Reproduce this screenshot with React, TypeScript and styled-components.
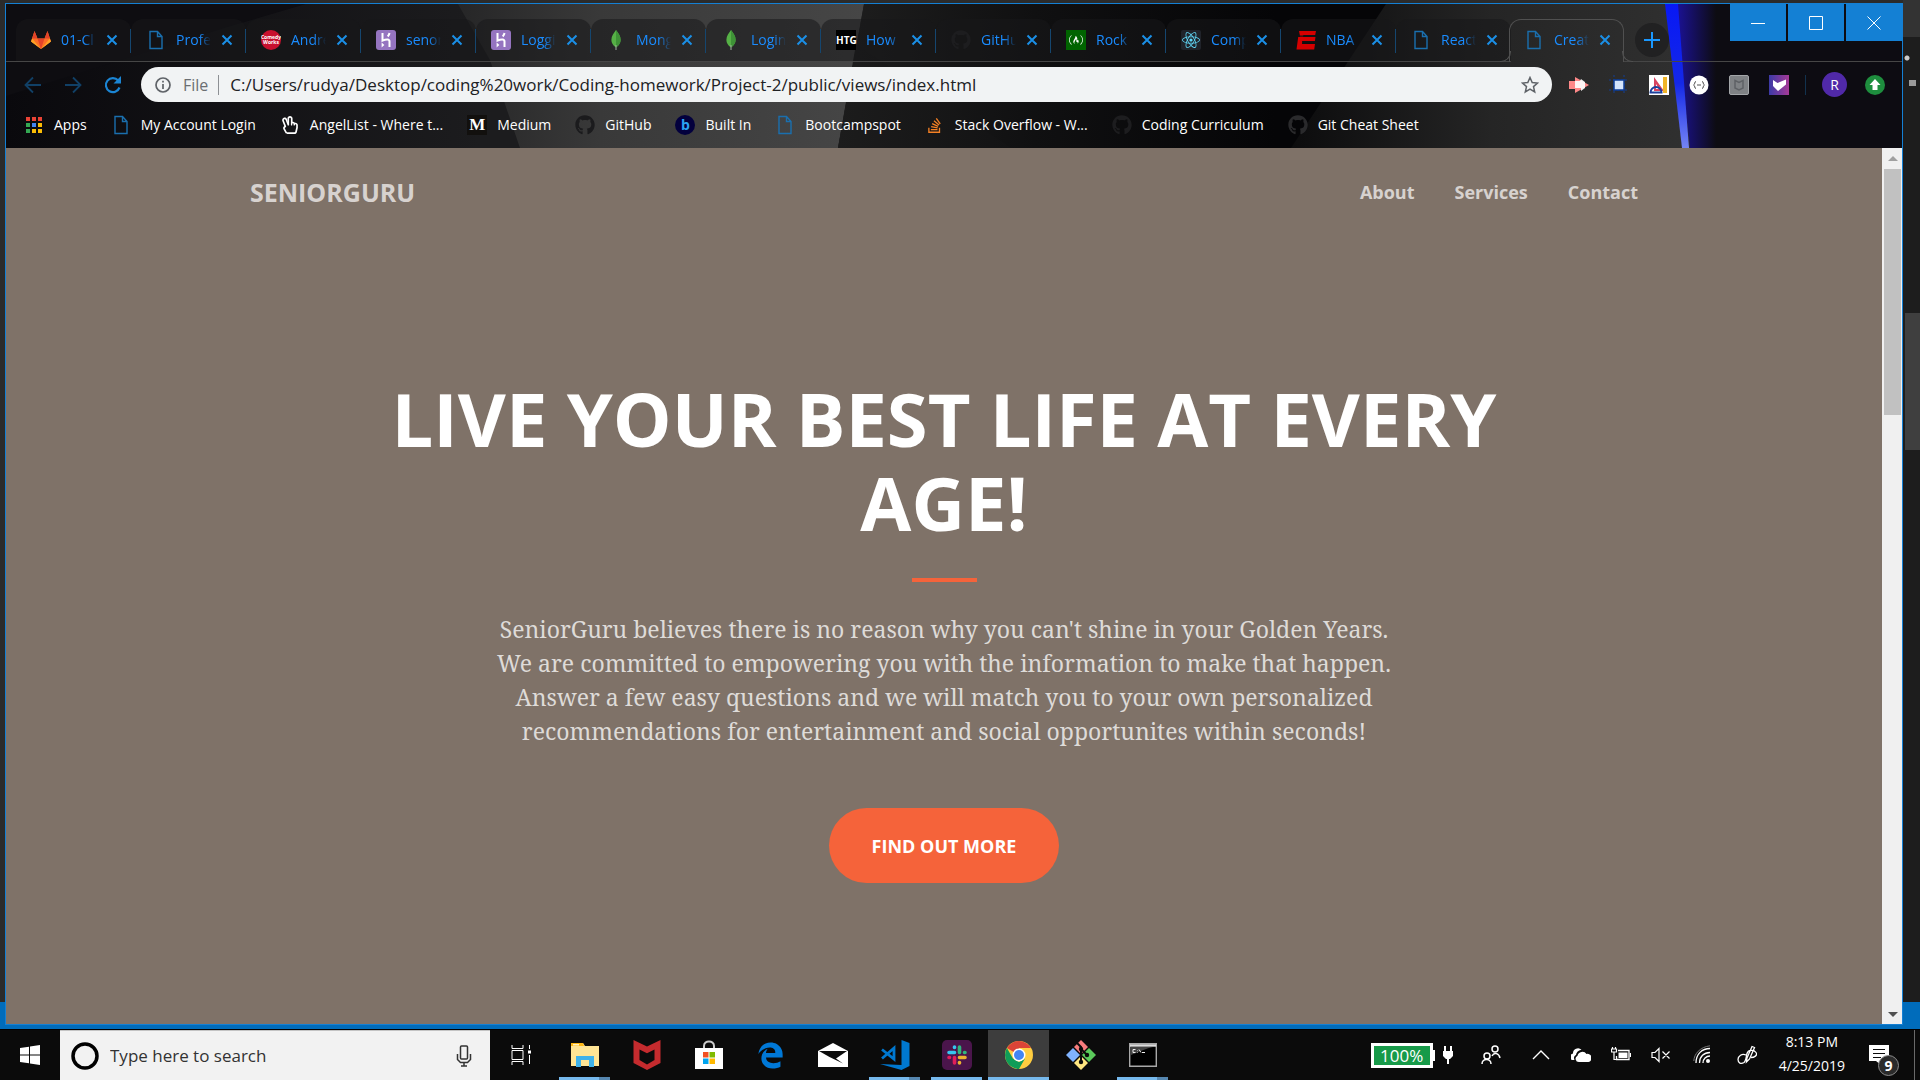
import React from "react";
import styled, { createGlobalStyle, css } from "styled-components";
import {
  FaGithub,
  FaReact,
  FaStackOverflow,
  FaRegHandPeace,
  FaFreeCodeCamp,
  FaEdgeLegacy,
} from "react-icons/fa";

const ui = `"Open Sans", "Noto Sans", sans-serif`;
const accent = "#1a8cff";
const blue = "#1480d4";
const orange = "#f5633a";

const GlobalStyle = createGlobalStyle`
  * { box-sizing: border-box; }
  body { margin: 0; background: #0b0b0b; font-family: ${ui}; }
  button, input { font-family: inherit; border: 0; padding: 0; background: none; color: inherit; }
  a { color: inherit; text-decoration: none; }
  svg { display: block; flex: none; }
`;

/* ---------- desktop and window ---------- */

const Screen = styled.div`
  min-height: 100vh;
  display: flex;
  flex-direction: column;
`;

const Desktop = styled.div`
  flex: 1;
  display: flex;
  padding: 3px 17px 4px 5px;
  background:
    radial-gradient(circle at 4px 4px, #ccc 2px, transparent 3px) right 9px top 54px / 8px 8px no-repeat,
    linear-gradient(#9a9a9a, #9a9a9a) right 4px top 80px / 7px 6px no-repeat,
    linear-gradient(#3f3f3f, #3f3f3f) right 313px / 15px 137px no-repeat,
    linear-gradient(#006cbb, #006cbb) left bottom / 100% 27px no-repeat,
    linear-gradient(#333 0 37px, #1d1d1d 37px) right top / 17px 100% no-repeat,
    #2b2b2b;
`;

const BrowserWindow = styled.div`
  flex: 1;
  min-width: 0;
  display: flex;
  flex-direction: column;
  border: 1px solid ${blue};
`;

const Frame = styled.header`
  position: relative;
  background: #0d0c10;
  color: #fff;
`;

const FrameArt = styled.svg`
  position: absolute;
  inset: 0;
  width: 100%;
  height: 100%;
`;

/* ---------- tabs ---------- */

const TabStrip = styled.div`
  position: relative;
  display: flex;
  height: 58px;
`;

const StripLead = styled.div`
  width: 10px;
  border-bottom: 1px solid #464646;
`;

const Tab = styled.div<{ $active?: boolean }>`
  position: relative;
  flex: 0 1 115px;
  min-width: 0;
  margin-top: 15px;
  padding: 0 13px 0 15px;
  display: flex;
  align-items: center;
  gap: 10px;
  border-radius: 12px 12px 0 0;
  ${(p) =>
    p.$active
      ? css`
          margin-left: -2px;
          border: 1px solid #505050;
          border-bottom: 0;
          padding: 0 12px 2px 14px;
          &::before,
          &::after {
            content: "";
            position: absolute;
            bottom: 0;
            width: 10px;
            height: 10px;
            border-bottom: 1px solid #505050;
          }
          &::before {
            left: -10px;
            border-right: 1px solid #505050;
            border-bottom-right-radius: 10px;
          }
          &::after {
            right: -10px;
            border-left: 1px solid #505050;
            border-bottom-left-radius: 10px;
          }
        `
      : css`
          background: rgba(24, 24, 25, 0.55);
          border-bottom: 1px solid #464646;
          &:not(:nth-last-child(3))::after {
            content: "";
            position: absolute;
            right: 0;
            top: 10px;
            height: 24px;
            width: 1px;
            background: #15466f;
          }
        `}
`;

const TabTitle = styled.span`
  flex: 1;
  min-width: 0;
  overflow: hidden;
  white-space: nowrap;
  font-size: 14px;
  line-height: 20px;
  color: ${accent};
  mask-image: linear-gradient(90deg, #000 65%, transparent);
`;

const TabClose = styled.button`
  width: 12px;
  height: 12px;
  color: #1b8fe6;
`;

const StripRest = styled.div`
  flex: 1;
  display: flex;
  justify-content: space-between;
  border-bottom: 1px solid #464646;
`;

const NewTab = styled.button`
  margin: 19px 0 0 11px;
  width: 34px;
  height: 34px;
  border-radius: 50%;
  background: #212122;
  color: #1a98ff;
  display: grid;
  place-items: center;
`;

const WindowControls = styled.div`
  display: flex;
  gap: 2px;
  height: 37px;
`;

const WindowButton = styled.button`
  width: 56px;
  background: ${blue};
  color: #fff;
  display: grid;
  place-items: center;
`;

/* ---------- toolbar ---------- */

const Toolbar = styled.div`
  position: relative;
  display: flex;
  align-items: center;
  height: 45px;
  padding: 0 17px;
`;

const NavButton = styled.button<{ $dim?: boolean }>`
  width: 20px;
  height: 20px;
  margin-right: 20px;
  color: ${(p) => (p.$dim ? "#114066" : "#1b85d4")};
`;

const AddressBar = styled.div`
  flex: 1;
  display: flex;
  align-items: center;
  height: 35px;
  margin: 0 17px 0 -2px;
  padding: 0 13px 0 14px;
  border-radius: 18px;
  background: #f1f3f4;
  color: #202124;
  font-size: 16px;
`;

const Scheme = styled.label`
  display: flex;
  align-items: center;
  gap: 10px;
  margin-left: 12px;
  color: #6b6e72;
  &::after {
    content: "";
    width: 1px;
    height: 20px;
    margin-right: 11px;
    background: #8d9094;
  }
`;

const UrlInput = styled.input`
  flex: 1;
  min-width: 0;
  font-size: 17px;
  outline: 0;
`;

const Extensions = styled.div`
  display: flex;
  align-items: center;
  gap: 20px;
`;

const Ext = styled.button`
  width: 20px;
  height: 20px;
  display: grid;
  place-items: center;
`;

const ExtDivider = styled.span`
  width: 1px;
  height: 20px;
  margin: 0 -4px;
  background: #12324e;
`;

const Avatar = styled.button`
  width: 25px;
  height: 25px;
  margin-right: -2px;
  border-radius: 50%;
  background: #5029a8;
  color: #fff;
  font-size: 14px;
  line-height: 25px;
`;

const Bookmarks = styled.nav`
  position: relative;
  display: flex;
  align-items: center;
  gap: 24px;
  height: 41px;
  padding: 0 18px 5px;
  font-size: 14px;
  line-height: 20px;
  white-space: nowrap;
`;

const Bookmark = styled.a`
  display: flex;
  align-items: center;
  gap: 10px;
`;

const Glyph = styled.span<{
  $bg?: string;
  $color?: string;
  $round?: number;
  $size?: number;
  $face?: string;
}>`
  flex: none;
  width: 20px;
  height: 20px;
  display: grid;
  place-items: center;
  border-radius: ${(p) => p.$round ?? 0}px;
  background: ${(p) => p.$bg ?? "none"};
  color: ${(p) => p.$color ?? "#fff"};
  font-family: ${(p) => p.$face ?? "inherit"};
  font-size: ${(p) => p.$size ?? 20}px;
  line-height: 20px;
  font-weight: 700;
`;

/* ---------- page ---------- */

const Viewport = styled.div`
  flex: 1;
  display: flex;
`;

const Page = styled.main`
  flex: 1;
  min-width: 0;
  background: #7f7268;
  color: #fff;
`;

const SiteNav = styled.nav`
  display: flex;
  align-items: center;
  justify-content: space-between;
  max-width: 1388px;
  height: 88px;
  margin: 0 auto;
  font-weight: 700;
  color: rgba(255, 255, 255, 0.7);
`;

const Brand = styled.a`
  font-size: 25px;
`;

const SiteLinks = styled.div`
  display: flex;
  gap: 40px;
  font-size: 18px;
`;

const Hero = styled.section`
  display: flex;
  flex-direction: column;
  align-items: center;
  padding: 141px 20px 60px;
  text-align: center;
`;

const Headline = styled.h1`
  max-width: 1160px;
  margin: 0;
  font-size: 74px;
  line-height: 84px;
  font-weight: 700;
`;

const Rule = styled.hr`
  width: 65px;
  height: 4px;
  margin: 33px 0 30px;
  border: 0;
  background: ${orange};
`;

const Lead = styled.p`
  margin: 0 0 60px;
  font-family: "Noto Serif", "DejaVu Serif Condensed", "Liberation Serif", serif;
  font-size: 23px;
  line-height: 34px;
  color: #dedbd8;
`;

const LeadLine = styled.span`
  display: block;
`;

const CallToAction = styled.button`
  height: 75px;
  padding: 0 43px;
  border-radius: 38px;
  background: ${orange};
  color: #fff;
  font-size: 18px;
  font-weight: 700;
`;

const Scrollbar = styled.div`
  width: 20px;
  display: flex;
  flex-direction: column;
  align-items: center;
  padding: 8px 1px 7px 2px;
  background: #f0f0f0;
`;

const ScrollThumb = styled.div`
  width: 100%;
  height: 246px;
  margin: 8px 0 auto;
  background: #c1c1c1;
`;

/* ---------- taskbar ---------- */

const Taskbar = styled.footer`
  display: flex;
  align-items: stretch;
  height: 51px;
  border-top: 1px solid #000;
  background: #0b0b0b;
  color: #fff;
`;

const Start = styled.button`
  width: 60px;
  display: grid;
  place-items: center;
`;

const SearchBox = styled.label`
  width: 430px;
  display: flex;
  align-items: center;
  padding: 0 18px 0 11px;
  gap: 11px;
  background: #f2f2f2;
  border-top: 1px solid #c4c4c4;
  color: #2b2b2b;
`;

const SearchInput = styled.input`
  flex: 1;
  min-width: 0;
  font-size: 17px;
  outline: 0;
  &::placeholder {
    color: #333;
    opacity: 1;
  }
`;

const Apps = styled.div`
  display: flex;
  gap: 1px;
  margin-right: auto;
`;

const AppButton = styled.button<{ $state?: "open" | "many" | "focus" }>`
  width: 61px;
  display: grid;
  place-items: center;
  background: ${(p) => (p.$state === "focus" ? "#3d3d3d" : "none")};
  position: relative;
  ${(p) =>
    p.$state &&
    css`
      &::after {
        content: "";
        position: absolute;
        bottom: 0;
        left: ${p.$state === "focus" ? 0 : 5}px;
        right: ${p.$state === "focus" ? 0 : 5}px;
        height: 3px;
        background: ${p.$state === "many"
          ? "linear-gradient(90deg, #76b9ed 0 40px, #5687b0 40px)"
          : "#76b9ed"};
      }
    `}
`;

const TaskViewButton = styled(AppButton)`
  margin-right: 2px;
`;

const Battery = styled.div`
  display: flex;
  align-items: center;
  gap: 10px;
  margin-right: 28px;
`;

const Charge = styled.span`
  position: relative;
  width: 62px;
  height: 25px;
  border: 3px solid #fff;
  background: #179a49;
  font-size: 17px;
  line-height: 19px;
  text-align: center;
  &::after {
    content: "";
    position: absolute;
    left: 59px;
    top: 4px;
    width: 2px;
    height: 11px;
    background: #fff;
  }
`;

const Tray = styled.div`
  display: flex;
  align-items: center;
  gap: 20px;
`;

const TrayButton = styled.button<{ $lead?: number }>`
  width: 20px;
  height: 20px;
  margin-left: ${(p) => p.$lead ?? 0}px;
`;

const Clock = styled.time`
  margin: 0 24px 0 22px;
  font-size: 14px;
  line-height: 24px;
  text-align: center;
  white-space: nowrap;
`;

const Notifications = styled.button`
  position: relative;
  width: 30px;
  margin-right: 15px;
  display: flex;
  align-items: center;
`;

const Badge = styled.span`
  position: absolute;
  right: 0;
  top: 25px;
  width: 21px;
  height: 21px;
  border: 1px solid #8c8c8c;
  border-radius: 50%;
  background: #2b2b2b;
  font-size: 14px;
  line-height: 19px;
  font-weight: 700;
  text-align: center;
`;

const ShowDesktop = styled.button`
  width: 6px;
  border-left: 1px solid #6a6a6a;
`;

/* ---------- drawings ---------- */

const Svg = ({ s = 20, h, children }: { s?: number; h?: number; children: React.ReactNode }) => (
  <svg
    width={s}
    height={h ?? s}
    viewBox={`0 0 ${s} ${h ?? s}`}
    fill="none"
    stroke="currentColor"
    aria-hidden="true"
  >
    {children}
  </svg>
);

const FileIcon = () => (
  <Glyph $color="#1a6fae">
    <Svg>
      <path d="M4 1.5h7.5l4.5 5V18.5H4zM11.500 1.500v5H16" strokeWidth="1.4" />
    </Svg>
  </Glyph>
);

const HerokuIcon = () => (
  <Glyph $bg="#9574c0" $round={3}>
    <Svg>
      <path d="M6.500 3v7.600c4-1.800 7-1.600 7 .8V17M13.500 3c-.2 1.500-.8 2.500-1.800 3.500" strokeWidth="2" />
      <path d="M5.600 12.600v4.800l2.800-2.400z" fill="#fff" stroke="none" />
    </Svg>
  </Glyph>
);

const LeafIcon = () => (
  <Glyph>
    <Svg>
      <path d="M10 0c2.500 3.500 4.600 5.800 4.600 9.800S12 16 10 17.500C8 16 5.400 13.800 5.400 9.800S8 3 10 0z" fill="#56b146" stroke="none" />
      <path d="M10 0c2.500 3.500 4.600 5.800 4.600 9.800S12 16 10 17.500z" fill="#3f9337" stroke="none" />
      <path d="M10 15v5" stroke="#9fb0a0" />
    </Svg>
  </Glyph>
);

const ComedyText = styled.text`
  font: 700 5px ${ui};
  fill: #fff;
  stroke: none;
`;

const ComedyIcon = () => (
  <Glyph $bg="#c8102e" $round={10}>
    <Svg>
      <ComedyText x="10" y="9" textAnchor="middle">Comedy</ComedyText>
      <ComedyText x="10" y="14" textAnchor="middle">Works</ComedyText>
    </Svg>
  </Glyph>
);

const GitlabIcon = () => (
  <Glyph>
    <Svg>
      <path d="M10 19 0 11.500 3.500 1l3 7.500h7L16.500 1 20 11.500z" fill="#fc6d26" stroke="none" />
      <path d="M10 19 6.500 8.500h7z" fill="#e24329" stroke="none" />
      <path d="M10 19 0 11.500l1.200-3zM10 19l10-7.500-1.200-3z" fill="#fca326" stroke="none" />
      <path d="M3.500 1 1.200 8.500h5.300zM16.500 1l-3 7.500h5.300z" fill="#e24329" stroke="none" />
    </Svg>
  </Glyph>
);

const EspnIcon = () => (
  <Glyph>
    <Svg>
      <path d="M3 1h17l-.8 4H7.300L7 7h12.500l-.6 4H6.400L6 14h13l-.8 5.500H.5L2.200 7h2z" fill="#d50000" stroke="none" />
      <path d="M2 6.200h17M6 11.800h13" stroke="#151515" strokeWidth="1.200" />
    </Svg>
  </Glyph>
);

const AppsIcon = () => {
  const colors = ["#ea4335", "#ea4335", "#ea4335", "#34a853", "#4285f4", "#fbbc05", "#34a853", "#fbbc05", "#fbbc05"];
  return (
    <Glyph>
      <Svg>
        {colors.map((c, i) => (
          <rect key={i} x={2 + (i % 3) * 6} y={2 + Math.floor(i / 3) * 6} width="4" height="4" fill={c} stroke="none" />
        ))}
      </Svg>
    </Glyph>
  );
};

const CrossIcon = () => (
  <Svg s={12}>
    <path d="m1.500 1.500 9 9m0-9-9 9" strokeWidth="2" />
  </Svg>
);

/* ---------- data ---------- */

const tabs: { title: string; icon: React.ReactNode }[] = [
  { title: "01-Cl", icon: <GitlabIcon /> },
  { title: "Profe", icon: <FileIcon /> },
  { title: "Andre", icon: <ComedyIcon /> },
  { title: "senor", icon: <HerokuIcon /> },
  { title: "Loggi", icon: <HerokuIcon /> },
  { title: "Mong", icon: <LeafIcon /> },
  { title: "Login", icon: <LeafIcon /> },
  { title: "How", icon: <Glyph $bg="#000" $size={10}>HTG</Glyph> },
  { title: "GitHu", icon: <Glyph $color="#1d1d1f"><FaGithub /></Glyph> },
  { title: "Rock", icon: <Glyph $bg="#006400" $size={14}><FaFreeCodeCamp /></Glyph> },
  { title: "Comp", icon: <Glyph $bg="#20232a" $color="#61dafb" $size={18} $round={2}><FaReact /></Glyph> },
  { title: "NBA", icon: <EspnIcon /> },
  { title: "React", icon: <FileIcon /> },
  { title: "Creat", icon: <FileIcon /> },
];

const bookmarks: { title: string; icon: React.ReactNode }[] = [
  { title: "Apps", icon: <AppsIcon /> },
  { title: "My Account Login", icon: <FileIcon /> },
  { title: "AngelList - Where t...", icon: <Glyph $size={18}><FaRegHandPeace /></Glyph> },
  { title: "Medium", icon: <Glyph $bg="#12100e" $size={17} $face={`"Liberation Serif", serif`}>M</Glyph> },
  { title: "GitHub", icon: <Glyph $color="#1b1b1d"><FaGithub /></Glyph> },
  { title: "Built In", icon: <Glyph $bg="#03003d" $color="#2aa4f4" $round={10} $size={14}>b</Glyph> },
  { title: "Bootcampspot", icon: <FileIcon /> },
  { title: "Stack Overflow - W...", icon: <Glyph $color="#f48024" $size={17}><FaStackOverflow /></Glyph> },
  { title: "Coding Curriculum", icon: <Glyph $color="#1d1d1f"><FaGithub /></Glyph> },
  { title: "Git Cheat Sheet", icon: <Glyph $color="#2a2a2c"><FaGithub /></Glyph> },
];

/* ---------- sections ---------- */

const BrowserFrame = () => (
  <Frame>
    <FrameArt viewBox="0 0 1896 144" preserveAspectRatio="none" aria-hidden="true">
      <defs>
        <linearGradient id="left" x1="0" x2="1"><stop offset="0" stopColor="#0a090d" /><stop offset=".55" stopColor="#1c1c1e" /></linearGradient>
        <linearGradient id="mid" x1="0" x2="1"><stop offset="0" stopColor="#262627" /><stop offset=".35" stopColor="#393939" /><stop offset="1" stopColor="#464646" /></linearGradient>
        <linearGradient id="fade" x1="0" x2="1"><stop offset="0" stopColor="#1e1e1e" /><stop offset=".45" stopColor="#101011" /><stop offset="1" stopColor="#050507" /></linearGradient>
        <linearGradient id="facet" x1="0" x2="1"><stop offset="0" stopColor="#1c1c1c" /><stop offset="1" stopColor="#131314" /></linearGradient>
        <linearGradient id="right" x1="0" x2="1"><stop offset="0" stopColor="#0c0c0d" /><stop offset=".5" stopColor="#252525" /><stop offset="1" stopColor="#303030" /></linearGradient>
        <linearGradient id="glow" x1="0" x2="1"><stop offset="0" stopColor="#1c12a0" /><stop offset="1" stopColor="#0d0c12" /></linearGradient>
        <linearGradient id="beam" x1="0" x2="0" y1="0" y2="1"><stop offset="0" stopColor="#0818f5" /><stop offset=".55" stopColor="#1428e8" /><stop offset="1" stopColor="#7484f4" /></linearGradient>
      </defs>
      <rect width="1896" height="144" fill="#0d0c12" />
      <path d="M0 0H300L225 22 0 92z" fill="#0e0d11" />
      <path d="M300 0H860V144H0V92L225 22z" fill="url(#left)" />
      <path d="M452 0H858L832 144H514L484 56z" fill="url(#mid)" />
      <path d="M832 144 858 0h412v144z" fill="url(#fade)" />
      <path d="M850 40 1005 144H832z" fill="url(#facet)" />
      <path d="M1268 0h115l-95 144h-20z" fill="#050507" />
      <path d="M1380 0h290l16 144h-401z" fill="url(#right)" />
      <path d="M1668 0h42v144h-26z" fill="url(#glow)" />
      <path d="M1659 0h13l11 144h-7z" fill="url(#beam)" />
    </FrameArt>

    <TabStrip>
      <StripLead />
      {tabs.map((t, i) => (
        <Tab key={i} $active={i === tabs.length - 1}>
          {t.icon}
          <TabTitle>{t.title}</TabTitle>
          <TabClose aria-label={`Close ${t.title}`}><CrossIcon /></TabClose>
        </Tab>
      ))}
      <StripRest>
        <NewTab aria-label="New tab">
          <Svg s={16}><path d="M8 0v16M0 8h16" strokeWidth="2" /></Svg>
        </NewTab>
        <WindowControls>
          <WindowButton aria-label="Minimize"><Svg s={14}><path d="M0 7.500h14" /></Svg></WindowButton>
          <WindowButton aria-label="Maximize"><Svg s={14}><path d="M.5.5h13v13H.5z" /></Svg></WindowButton>
          <WindowButton aria-label="Close"><Svg s={14}><path d="m.5.5 13 13m0-13-13 13" /></Svg></WindowButton>
        </WindowControls>
      </StripRest>
    </TabStrip>

    <Toolbar>
      <NavButton $dim aria-label="Back"><Svg><path d="M18 10H3m7-7.500L2.500 10l7.500 7.500" strokeWidth="1.800" /></Svg></NavButton>
      <NavButton $dim aria-label="Forward"><Svg><path d="M2 10h15m-7-7.500 7.500 7.500-7.500 7.500" strokeWidth="1.800" /></Svg></NavButton>
      <NavButton aria-label="Reload">
        <Svg><path d="M16.500 12.500A7 7 0 1 1 15.200 5.500" strokeWidth="2.200" /><path d="M18 1v7.500h-7.500z" fill="currentColor" stroke="none" /></Svg>
      </NavButton>
      <AddressBar>
        <Svg s={16}><circle cx="8" cy="8" r="7" strokeWidth="1.700" stroke="#5f6368" /><path d="M8 7v5M8 3.800v1.800" stroke="#5f6368" strokeWidth="1.700" /></Svg>
        <Scheme htmlFor="url">File</Scheme>
        <UrlInput id="url" defaultValue="C:/Users/rudya/Desktop/coding%20work/Coding-homework/Project-2/public/views/index.html" />
        <Svg s={18}><path d="m9 1.500 2.200 5 5.300.5-4 3.600 1.200 5.400L9 13.200 4.300 16l1.200-5.400-4-3.600 5.300-.5z" stroke="#5f6368" strokeWidth="1.500" /></Svg>
      </AddressBar>
      <Extensions>
        <Ext aria-label="Record">
          <Svg><path d="M0 6h6V2l14 8-14 8v-4H0z" fill="#f88" stroke="none" /><path d="M6 6h5l1-2 4 3v6l-4 3v-3H6z" fill="#fff" stroke="none" opacity=".9" /></Svg>
        </Ext>
        <Ext aria-label="Capture">
          <Svg><path d="M5 0v20M15 0v20M0 5h20M0 15h20" stroke="#123f94" strokeDasharray="2 2" /><path d="M5 5h10v10H5z" fill="#d4e4fb" stroke="#0d3c96" strokeWidth="1.500" /></Svg>
        </Ext>
        <Ext aria-label="Design tools">
          <Svg>
            <path d="M0 0h20v20H0z" fill="#fff" stroke="none" />
            <path d="M5 2v14h10zM7 9v5h3z" fill="#d8435f" stroke="none" fillRule="evenodd" />
            <path d="M14 2h4v16h-4z" fill="#f0b429" stroke="none" />
            <path d="M1.500 17.500a5.500 5.500 0 0 1 11 0z" stroke="#1b3f9c" strokeWidth="2" />
          </Svg>
        </Ext>
        <Ext aria-label="JSON viewer">
          <Svg><circle cx="10" cy="10" r="9.500" fill="#fff" stroke="none" /><path d="M7 6.500c-2 0-.5 3-2.500 3.500 2 .5.5 3.500 2.500 3.500M13 6.500c2 0 .5 3 2.500 3.500-2 .5-.5 3.500-2.500 3.500M8 10h4" stroke="#555" /></Svg>
        </Ext>
        <Ext aria-label="WebAdvisor">
          <Svg><rect x=".5" y=".5" width="19" height="19" rx="1.500" fill="#7f8285" stroke="#a3a6a9" /><path d="m6 5.500 4 2 4-2v7.500l-4 2-4-2z" stroke="#5f6266" strokeWidth="1.500" /></Svg>
        </Ext>
        <Ext aria-label="Shopping">
          <Svg>
            <defs><linearGradient id="shop" x1="0" x2="1"><stop offset="0" stopColor="#3c3aa6" /><stop offset="1" stopColor="#a53a96" /></linearGradient></defs>
            <path d="M0 0h20v20H0z" fill="url(#shop)" stroke="none" /><path d="m4 5 4.500 3L17 4.500v5L9 16l-5-5z" fill="#fff" stroke="none" />
          </Svg>
        </Ext>
        <ExtDivider />
        <Avatar>R</Avatar>
        <Ext aria-label="Update available">
          <Svg><circle cx="10" cy="10" r="10" fill="#1e8e3e" stroke="none" /><path d="m10 4 5.500 6H12.500v5h-5v-5h-3z" fill="#fff" stroke="none" /></Svg>
        </Ext>
      </Extensions>
    </Toolbar>

    <Bookmarks aria-label="Bookmarks">
      {bookmarks.map((b) => (
        <Bookmark key={b.title} href="#">{b.icon}{b.title}</Bookmark>
      ))}
    </Bookmarks>
  </Frame>
);

const Site = () => (
  <Page>
    <SiteNav>
      <Brand href="#">SENIORGURU</Brand>
      <SiteLinks>
        <a href="#about">About</a>
        <a href="#services">Services</a>
        <a href="#contact">Contact</a>
      </SiteLinks>
    </SiteNav>
    <Hero>
      <Headline>LIVE YOUR BEST LIFE AT EVERY AGE!</Headline>
      <Rule />
      <Lead>
        <LeadLine>SeniorGuru believes there is no reason why you can't shine in your Golden Years.</LeadLine>
        <LeadLine>We are committed to empowering you with the information to make that happen.</LeadLine>
        <LeadLine>Answer a few easy questions and we will match you to your own personalized</LeadLine>
        <LeadLine>recommendations for entertainment and social opportunites within seconds!</LeadLine>
      </Lead>
      <CallToAction>FIND OUT MORE</CallToAction>
    </Hero>
  </Page>
);

const SystemBar = () => (
  <Taskbar>
    <Start aria-label="Start">
      <Svg><path d="m0 3 9-1.300V9.500H0zM10 1.500 20 0v9.500H10zM0 10.500h9v7.800L0 17zM10 10.500h10V20l-10-1.500z" fill="#fff" stroke="none" /></Svg>
    </Start>
    <SearchBox>
      <Svg s={28}><circle cx="14" cy="14" r="12" stroke="#000" strokeWidth="3.500" /></Svg>
      <SearchInput placeholder="Type here to search" />
      <Svg s={16} h={22}><rect x="4.500" y="1" width="7" height="13" rx="1" stroke="#333" strokeWidth="1.500" /><path d="M1.500 9v5.500l3 3h7l3-3V9M8 18v3M5 21h6" stroke="#333" strokeWidth="1.500" /></Svg>
    </SearchBox>
    <Apps>
      <TaskViewButton aria-label="Task view">
        <Svg><path d="M1 0v3.500h11V0M1 20v-3.500h11V20M1 5.500h11v9H1zM18.500 0v4M18.500 10v9" /><path d="M17 5.500h3v3h-3z" fill="#fff" stroke="none" /></Svg>
      </TaskViewButton>
      <AppButton $state="many" aria-label="File Explorer">
        <Svg s={28} h={24}><path d="M0 0h12l2 3h14v20H0z" fill="#ffe595" stroke="none" /><path d="M0 0h12l1 3H0z" fill="#ffb915" stroke="none" /><path d="M2 1h6v1.500H2z" fill="#fff2c4" stroke="none" /><path d="M5 13h18v11h-5v-7h-8v7H5z" fill="#3fb2ea" stroke="none" /></Svg>
      </AppButton>
      <AppButton aria-label="McAfee">
        <Svg s={28} h={30}>
          <path d="M.5 0 14 6.500 27.500 0v23L14 30 .5 23z" fill="#c52b2e" stroke="none" />
          <path d="M6.500 9.500 14 13.200l7.500-3.700V20L14 24.500 6.500 20z" fill="#0b0b0b" stroke="none" />
        </Svg>
      </AppButton>
      <AppButton aria-label="Microsoft Store">
        <Svg s={28} h={30}>
          <path d="M9 9V6c0-6 10-6 10 0v3" stroke="#ccc" strokeWidth="2" /><path d="M0 8h28v21H0z" fill="#fff" stroke="none" />
          <path d="M8 12h5.500v5.500H8z" fill="#f25022" stroke="none" /><path d="M14.500 12H20v5.500h-5.500z" fill="#7fba00" stroke="none" />
          <path d="M8 18.500h5.500V24H8z" fill="#00a4ef" stroke="none" /><path d="M14.500 18.500H20V24h-5.500z" fill="#ffb900" stroke="none" />
        </Svg>
      </AppButton>
      <AppButton aria-label="Edge"><FaEdgeLegacy size={27} color="#0078d7" /></AppButton>
      <AppButton aria-label="Mail">
        <Svg s={30} h={24}><path d="M0 8 15 0l15 8v16H0z" fill="#fff" stroke="none" /><path d="M1 8h28L18 15.500l7 5L11.500 14z" fill="#0b0b0b" stroke="none" /></Svg>
      </AppButton>
      <AppButton $state="many" aria-label="Visual Studio Code">
        <Svg s={30}>
          <path d="M21.500 0 29.500 3v23l-8 4L0 24l21.500 1z" fill="#0078d0" stroke="none" />
          <path d="M2 9.500 14 19V8L2 18.500" stroke="#0078d0" strokeWidth="2.800" />
        </Svg>
      </AppButton>
      <AppButton $state="open" aria-label="Slack">
        <Svg s={30}>
          <rect width="30" height="30" rx="5" fill="#4a154b" stroke="none" />
          <g strokeWidth="3.600" strokeLinecap="round">
            <path d="M12.500 7v.5M7 12.500h5.500" stroke="#36c5f0" /><path d="M17.500 7v5.500M22.500 12.500h.5" stroke="#2eb67d" />
            <path d="M17.500 17.500H23M17.500 22.500v.5" stroke="#ecb22e" /><path d="M12.500 17.500V23M7 17.500h.5" stroke="#e01e5a" />
          </g>
        </Svg>
      </AppButton>
      <AppButton $state="focus" aria-label="Chrome">
        <Svg s={28}>
          <circle cx="14" cy="14" r="14" fill="#ffcd40" stroke="none" />
          <path d="M14 14 1.900 7A14 14 0 0 1 26.100 7H14z" fill="#db4437" stroke="none" />
          <path d="M14 28A14 14 0 0 1 1.900 7l6 10.500L14 21l6-3.500z" fill="#0f9d58" stroke="none" />
          <circle cx="14" cy="14" r="6.500" fill="#fff" stroke="none" /><circle cx="14" cy="14" r="5" fill="#4285f4" stroke="none" />
        </Svg>
      </AppButton>
      <AppButton aria-label="Git Bash">
        <Svg s={30}>
          <path d="m15 0 7 7-7 7-7-7z" fill="#f77c7c" stroke="none" /><path d="m7 8 7 7-7 7-7-7z" fill="#80b3ff" stroke="none" />
          <path d="m23 8 7 7-7 7-7-7z" fill="#5aca5a" stroke="none" /><path d="m15 16 7 7-7 7-7-7z" fill="#ffe680" stroke="none" />
          <path d="m11 3 4 4v15M15 9l6 6" stroke="#0b0b0b" strokeWidth="2" /><circle cx="15" cy="22" r="2.200" fill="#0b0b0b" stroke="none" /><circle cx="21" cy="15" r="2.200" fill="#0b0b0b" stroke="none" /><circle cx="15" cy="9" r="2.200" fill="#0b0b0b" stroke="none" />
        </Svg>
      </AppButton>
      <AppButton $state="many" aria-label="Command Prompt">
        <Svg s={28} h={24}>
          <path d="M.7.7h26.600v22.600H.7z" fill="#000" stroke="#a8a8a8" strokeWidth="1.400" /><path d="M1 2.500h26" stroke="#ddd" strokeWidth="2.400" />
          <path d="M2 4h22c-6 1-14 5-22 8z" fill="#444" stroke="none" /><path d="M6.500 6.500H4v3h2.500M8.500 7v.5m0 1.500v.5M10 6.500l2 3M13 9.500h3" stroke="#eee" />
        </Svg>
      </AppButton>
    </Apps>

    <Battery>
      <Charge>100%</Charge>
      <Svg s={10} h={18}><path d="M1 0h2v5h4V0h2v5h1v5l-3 3H6v5H4v-5H3l-3-3V5h1z" fill="#fff" stroke="none" /></Svg>
    </Battery>
    <Tray>
      <TrayButton aria-label="People">
        <Svg><circle cx="6" cy="11" r="3" strokeWidth="1.500" /><circle cx="14" cy="4" r="3" strokeWidth="1.500" /><path d="M1 19c0-6 9-6 9 0M11 11c2-4 7-3 8 2" strokeWidth="1.500" /></Svg>
      </TrayButton>
      <TrayButton $lead={10} aria-label="Show hidden icons"><Svg><path d="m2 14 8-8 8 8" strokeWidth="1.400" /></Svg></TrayButton>
      <TrayButton aria-label="OneDrive">
        <Svg><path d="M1 15a3.500 3.500 0 0 1 1-6.500 5 5 0 0 1 8.500-3.700C7 5.500 5 8 5 10c-2 1-2.500 3-1.500 5z" fill="#fff" stroke="none" /><path d="M8 17a3.300 3.300 0 0 1-1.500-6.300A5 5 0 0 1 15.500 9 4 4 0 0 1 17.500 17z" fill="#fff" stroke="none" /></Svg>
      </TrayButton>
      <TrayButton aria-label="Power">
        <Svg><path d="M7 5.500h11v9H5.500V11" strokeWidth="1.300" /><path d="M7.500 7.500h9v5.500h-9z" fill="#fff" stroke="none" /><path d="M19.400 8v4M1.500 2v2m3-2v2M.5 4h5v3h-5zM3 7v7.500h3" strokeWidth="1.200" /></Svg>
      </TrayButton>
      <TrayButton aria-label="Muted"><Svg><path d="M1 7.500h3L8 3.500v13l-4-4H1zM11.500 6.500l7 7m0-7-7 7" strokeWidth="1.200" /></Svg></TrayButton>
      <TrayButton $lead={2} aria-label="Wi-Fi">
        <Svg><path d="M3 18C3 9 9 3.500 17 3.500M6.500 18C6.500 11.500 11 7.500 17 7.500M10 18c0-4 3-7 7-7" strokeWidth="1.300" /><circle cx="15" cy="16" r="2" fill="#fff" stroke="none" /><path d="M.8 16C1 9 7 2 17 .8" stroke="#777" /></Svg>
      </TrayButton>
      <TrayButton $lead={4} aria-label="Ink workspace">
        <Svg><path d="M10 13 15 1.500l2.500 1L12.500 14 9.500 17zM9 10c-4-2-8 1-8 4.500s3 5 6 3c2-1.500 2-5 3-9s7-4 9-1-2 5-5 5" strokeWidth="1.300" /></Svg>
      </TrayButton>
    </Tray>
    <Clock dateTime="2019-04-25T20:13">
      8:13 PM
      <br />
      4/25/2019
    </Clock>
    <Notifications aria-label="9 notifications">
      <Svg><path d="M0 0h20v16h-8v4l-5-4H0z" fill="#fff" stroke="none" /><path d="M4 4.500h12M4 8.500h12M4 12.500h8" stroke="#0b0b0b" strokeWidth="1.200" /></Svg>
      <Badge>9</Badge>
    </Notifications>
    <ShowDesktop aria-label="Show desktop" />
  </Taskbar>
);

const App = () => (
  <Screen>
    <GlobalStyle />
    <Desktop>
      <BrowserWindow>
        <BrowserFrame />
        <Viewport>
          <Site />
          <Scrollbar aria-hidden="true">
            <Svg s={10} h={5}><path d="M0 5 5 0l5 5z" fill="#a0a0a0" stroke="none" /></Svg>
            <ScrollThumb />
            <Svg s={10} h={5}><path d="m0 0 5 5 5-5z" fill="#505050" stroke="none" /></Svg>
          </Scrollbar>
        </Viewport>
      </BrowserWindow>
    </Desktop>
    <SystemBar />
  </Screen>
);

export default App;
